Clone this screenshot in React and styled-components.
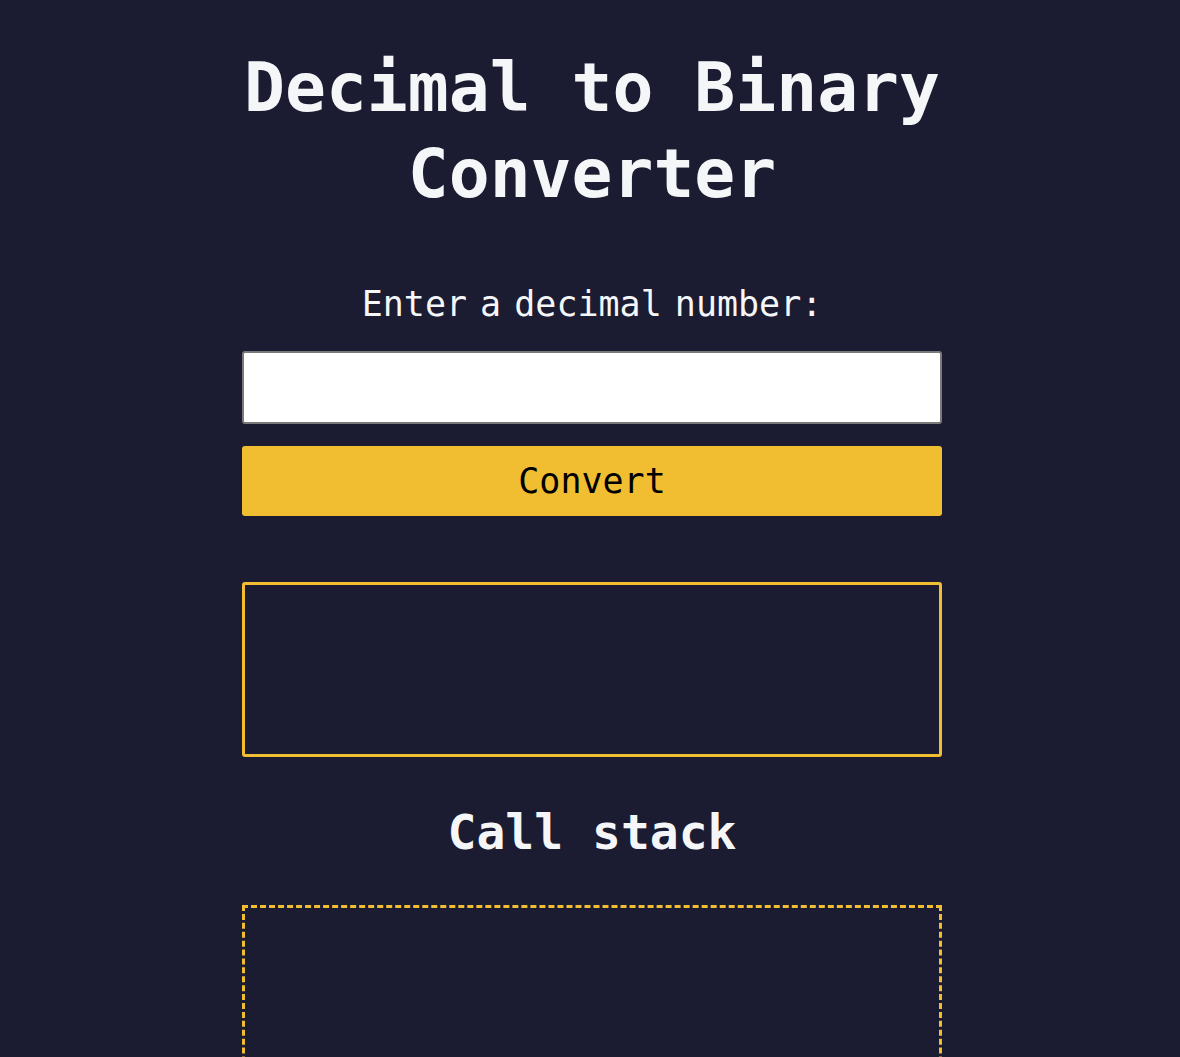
import React, { useState } from 'react';
import styled, { createGlobalStyle } from 'styled-components';

const GlobalStyle = createGlobalStyle`
  * {
    box-sizing: border-box;
  }

  body {
    margin: 0;
    background-color: #1b1b32;
    color: #f5f6f7;
    font-family: "DejaVu Sans Mono", "Liberation Mono", monospace;
  }
`;

const Page = styled.main`
  max-width: 704px;
  margin: 0 auto;
  padding: 45px 0 0 4px;
  display: flex;
  flex-direction: column;
`;

const Title = styled.h1`
  margin: 0;
  text-align: center;
  font-size: 68px;
  line-height: 86px;
  font-weight: 700;
`;

const InputArea = styled.div`
  margin-top: 67px;
  display: flex;
  flex-direction: column;
`;

const Label = styled.label`
  text-align: center;
  font-size: 35px;
  line-height: 41px;
  word-spacing: -8px;
  margin-bottom: 26px;
`;

const NumberInput = styled.input`
  width: 100%;
  height: 73px;
  border: 2px solid #7a7a7a;
  border-radius: 3px;
  background: #ffffff;
  font-family: inherit;
  font-size: 30px;
  padding: 0 10px;
`;

const ConvertButton = styled.button`
  margin-top: 22px;
  width: 100%;
  height: 70px;
  border: none;
  border-radius: 3px;
  background-color: #f1be32;
  color: #000000;
  font-family: inherit;
  font-size: 35px;
  cursor: pointer;
`;

const Output = styled.div`
  margin-top: 66px;
  height: 175px;
  border: 3px solid #f1be32;
  border-radius: 3px;
  display: flex;
  align-items: center;
  justify-content: center;
  font-size: 40px;
`;

const StackTitle = styled.h2`
  margin: 47px 0 0;
  text-align: center;
  font-size: 48px;
  font-weight: 700;
`;

const StackBox = styled.div`
  margin-top: 45px;
  min-height: 300px;
  border: 3px dashed #f1be32;
`;

export default function App() {
  const [value, setValue] = useState('');
  const [result, setResult] = useState('');

  const convert = () => {
    const n = parseInt(value, 10);
    if (Number.isNaN(n) || n < 0) return;
    setResult(n.toString(2));
  };

  return (
    <>
      <GlobalStyle />
      <Page>
        <Title>Decimal to Binary Converter</Title>
        <InputArea>
          <Label htmlFor="number-input">Enter a decimal number:</Label>
          <NumberInput
            id="number-input"
            type="number"
            value={value}
            onChange={(e) => setValue(e.target.value)}
          />
          <ConvertButton onClick={convert}>Convert</ConvertButton>
        </InputArea>
        <Output>{result}</Output>
        <StackTitle>Call stack</StackTitle>
        <StackBox />
      </Page>
    </>
  );
}
